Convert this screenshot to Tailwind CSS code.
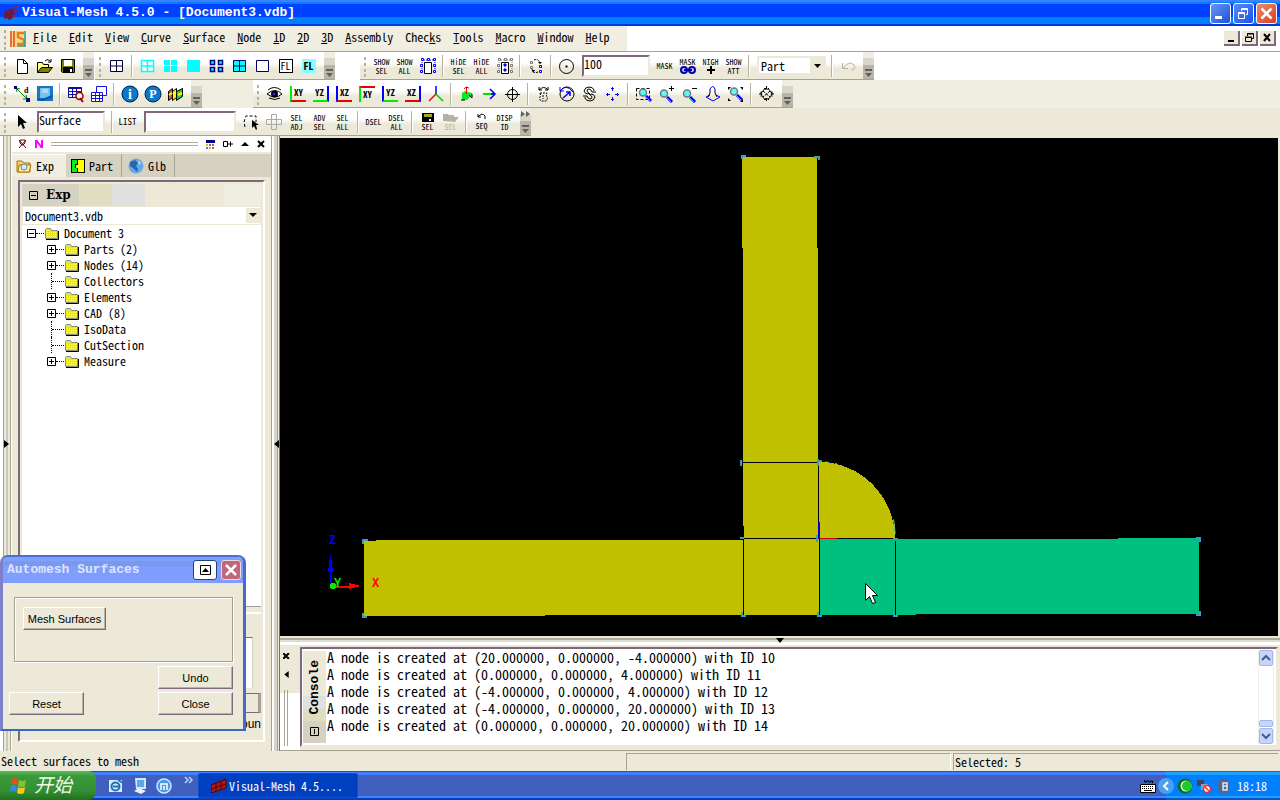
<!DOCTYPE html>
<html lang="en">
<head>
<meta charset="utf-8">
<title>Visual-Mesh 4.5.0 - [Document3.vdb]</title>
<script src="https://cdn.jsdelivr.net/npm/@tailwindcss/browser@4"></script>
</head>
<body class="h-screen overflow-hidden flex flex-col bg-[#ece9d8] text-black text-[12px] leading-4 font-['Noto_Sans_Mono_CJK_SC','Liberation_Mono',monospace]">

<svg width="0" height="0" class="absolute" aria-hidden="true">
  <symbol id="grip" viewBox="0 0 10 24"><path d="M4 3h2v3H4zM4 9h2v3H4zM4 15h2v3H4zM4 20h2v3H4z" fill="#b5b2a3"/></symbol>
  <symbol id="more" viewBox="0 0 11 27"><path d="M0 0h11v6H0z" fill="#f0eee4"/><path d="M0 6h11v7H0z" fill="#d8d5cb"/><path d="M0 13h11v14H0z" fill="#b8b5a6"/><path d="M2 17h7v2H2zM2 21h7l-3.500 4z" fill="#606060"/></symbol>
  <symbol id="folder" viewBox="0 0 16 13"><path d="M1.500 11.500v-9l1-1h4l1 2h6v8z" fill="#e8e820" stroke="#8c8c8c"/><path d="M2 12.500h12.500V4" fill="none" stroke="#000"/><path d="M3 5.500h10M3 7.500h10M3 9.500h10" stroke="#fffba0" stroke-dasharray="1 1"/></symbol>
  <symbol id="plus" viewBox="0 0 9 9"><path d="M.5.5h8v8h-8z" fill="#fff" stroke="#000"/><path d="M2 4.500h5M4.500 2v5" stroke="#000"/></symbol>
  <symbol id="minus" viewBox="0 0 9 9"><path d="M.5.5h8v8h-8z" fill="none" stroke="#000"/><path d="M2 4.500h5" stroke="#000"/></symbol>
  <symbol id="lens" viewBox="0 0 18 18"><circle cx="7" cy="6.500" r="3.500" fill="#5ff" stroke="#777" stroke-width="1.500"/><path d="M10 10l5 5" stroke="#00f" stroke-width="3"/><path d="M9 10l5 5" stroke="#0cf"/></symbol>
</svg>

<!-- Title bar -->
<header class="h-[26px] shrink-0 flex items-center pl-1 pr-[3px] bg-[linear-gradient(#4080ff_0_2px,#0080ff_2px_4px,#0040ff_4px_17px,#0080ff_17px_24px,#0038e8_24px)] text-white">
  <svg class="w-[18px] h-[18px] shrink-0" viewBox="0 0 18 18" aria-hidden="true"><path d="M0 10l2-4 2 1 2-3 2 2 3-3-1 4 1 3-3 1 1 3-4 2-2-2-3 1z" fill="#701838"/><path d="M10 4l3-2M10 8l3-1M9 13l3-2" stroke="#a02030" stroke-width="2"/></svg>
  <h1 class="font-bold text-[13px] font-['Liberation_Mono',monospace] whitespace-pre">Visual-Mesh 4.5.0 - [Document3.vdb]</h1>
  <div class="ml-auto flex gap-[2px] [&_button]:w-[21px] [&_button]:h-[21px] [&_button]:rounded-[3px] [&_button]:border [&_button]:border-white">
    <button aria-label="Minimize" class="bg-linear-to-br from-[#6a94f8] to-[#1c50d8]"><svg viewBox="0 0 19 19"><path d="M4 12h7v3H4z" fill="#fff"/></svg></button>
    <button aria-label="Restore" class="bg-linear-to-br from-[#5a8af8] to-[#1c50e8]"><svg viewBox="0 0 19 19" fill="none" stroke="#fff"><path d="M4.500 8.500h6v6h-6zM4 9.500h7M7.500 7V4.500h6v6H12M7 5.500h7"/></svg></button>
    <button aria-label="Close" class="bg-linear-to-br from-[#f08868] to-[#d83c18]"><svg viewBox="0 0 19 19"><path d="M4.500 4.500l10 10M14.500 4.500l-10 10" stroke="#fff" stroke-width="2.500"/></svg></button>
  </div>
</header>

<!-- Menu bar -->
<nav class="h-[26px] shrink-0 flex items-center bg-white border-b border-[#a5a293] pr-1">
  <div class="h-full w-[627px] flex items-center bg-[#f0eee1]">
    <svg class="w-[10px] h-6 shrink-0"><use href="#grip"/></svg>
    <svg class="w-4 h-4 shrink-0" viewBox="0 0 16 16"><path d="M0 0h16v16H0z" fill="#f8d890"/><path d="M1 0v16M4 0v16" stroke="#e04818" stroke-width="1.500"/><path d="M14 2H8v4l6 3v4H7" fill="none" stroke="#e88010" stroke-width="2.500"/><path d="M15 0v16M7 15h8" stroke="#30a090" stroke-width="1.500"/></svg>
    <div class="flex gap-3 pl-[7px] pb-[3px] [&_button]:whitespace-nowrap">
      <button><u>F</u>ile</button><button><u>E</u>dit</button><button><u>V</u>iew</button><button><u>C</u>urve</button><button><u>S</u>urface</button><button><u>N</u>ode</button><button><u>1</u>D</button><button><u>2</u>D</button><button><u>3</u>D</button><button><u>A</u>ssembly</button><button>Chec<u>k</u>s</button><button><u>T</u>ools</button><button><u>M</u>acro</button><button><u>W</u>indow</button><button><u>H</u>elp</button>
    </div>
  </div>
  <div class="ml-auto flex gap-[2px] [&_button]:w-4 [&_button]:h-[15px] [&_button]:bg-[#ece9d8] [&_button]:border-r-2 [&_button]:border-b-2 [&_button]:border-[#80687c]">
    <button aria-label="Minimize document"><svg viewBox="0 0 14 13"><path d="M4 9h6v2H4z"/></svg></button>
    <button aria-label="Restore document"><svg viewBox="0 0 14 13" fill="none" stroke="#000"><path d="M3.500 6.500h6v4h-6zM3 6h7M5.500 5V2.500h6v5H10M5 3h7"/></svg></button>
    <button aria-label="Close document"><svg viewBox="0 0 14 13"><path d="M4 3l6 7M10 3l-6 7" stroke="#000" stroke-width="2"/></svg></button>
  </div>
</nav>

<!-- Toolbars -->
<div class="shrink-0 [&_button]:w-[23px] [&_button]:h-[27px] [&_button]:shrink-0 [&_button]:flex [&_button]:flex-col [&_button]:items-center [&_button]:justify-center [&_button]:text-[8px] [&_button]:leading-[9px] [&_button]:font-medium [&_button>svg]:w-[18px] [&_button>svg]:h-[18px] [&_i]:w-[2px] [&_i]:h-[22px] [&_i]:mx-[3px] [&_i]:shrink-0 [&_i]:bg-[#b5b2a3] [&_i]:border-r [&_i]:border-white">

  <div class="h-7 flex bg-white">
    <div class="flex items-center h-7 border-b border-[#a5a293] bg-[linear-gradient(#fff_0_10px,#f5f3ea_14px,#ece9d8_16px)]">
      <svg class="w-[10px] h-6"><use href="#grip"/></svg>
      <button aria-label="New"><svg viewBox="0 0 18 18"><path d="M4.500 2.500h6l4 4v10h-10zM10.500 2.500v4h4" fill="#fff" stroke="#000"/></svg></button>
      <button aria-label="Open"><svg viewBox="0 0 18 18"><path d="M1.500 15.500v-10h5l1 2h5v3" fill="#ff8" stroke="#000"/><path d="M1.500 15.500l4-5h11l-4 5z" fill="#808000" stroke="#000"/><path d="M9 4q3-3 6 1M15 2v3h-3" fill="none" stroke="#000"/></svg></button>
      <button aria-label="Save"><svg viewBox="0 0 18 18"><path d="M2.500 2.500h13v13h-12l-1-1z" fill="#808000" stroke="#000"/><path d="M5 3h8v6H5z" fill="#fff"/><path d="M4 10h10v6H4z"/><path d="M11 12h2v3h-2z" fill="#fff"/></svg></button>
      <button aria-label="More file tools" class="w-[11px]! ml-1"><svg class="w-[11px]! h-[27px]!"><use href="#more"/></svg></button>
    </div>
    <div class="ml-px flex items-center h-7 border-b border-[#a5a293] bg-[linear-gradient(#fff_0_10px,#f5f3ea_14px,#ece9d8_16px)]">
      <svg class="w-[10px] h-6"><use href="#grip"/></svg>
      <button aria-label="Grid"><svg viewBox="0 0 18 18"><path d="M2.500 3.500h12v11h-12zM8.500 3v12M2 9h13" fill="#fff" stroke="#000040"/></svg></button><i></i>
      <button aria-label="Wireframe"><svg viewBox="0 0 18 18"><path d="M2.500 3.500h12v11h-12zM8.500 3v12M2 9h13" fill="#fff" stroke="#0ff" stroke-width="1.500"/></svg></button>
      <button aria-label="Flat with edges"><svg viewBox="0 0 18 18"><path d="M2 3h6v5H2zM9 3h6v5H9zM2 9h6v6H2zM9 9h6v6H9z" fill="#0ff"/></svg></button>
      <button aria-label="Flat"><svg viewBox="0 0 18 18"><path d="M2 3h13v12H2z" fill="#0ff"/></svg></button>
      <button aria-label="Shrink"><svg viewBox="0 0 18 18"><path d="M2.500 3.500h4v4h-4zM10.500 3.500h4v4h-4zM2.500 10.500h4v4h-4zM10.500 10.500h4v4h-4z" fill="#0ff" stroke="#000080" stroke-width="1.500"/></svg></button>
      <button aria-label="Shaded grid"><svg viewBox="0 0 18 18"><path d="M2.500 3.500h12v11h-12zM8.500 3v12M2 9h13" fill="#0ff" stroke="#000080"/></svg></button>
      <button aria-label="Outline"><svg viewBox="0 0 18 18"><path d="M2.500 3.500h12v11h-12z" fill="#fff" stroke="#000060"/></svg></button>
      <button aria-label="Feature lines"><span class="border border-black bg-white w-[14px] h-[14px] leading-3 text-[10px]">FL</span></button>
      <button aria-label="Feature lines shaded"><span class="bg-[#8ff] w-[14px] h-[14px] leading-[14px] text-[10px] font-bold">FL</span></button>
      <button aria-label="More display tools" class="w-[11px]! ml-1"><svg class="w-[11px]! h-[27px]!"><use href="#more"/></svg></button>
    </div>
    <div class="ml-[25px] flex items-center h-7 border-b border-[#a5a293] bg-[linear-gradient(#fff_0_10px,#f5f3ea_14px,#ece9d8_16px)]">
      <svg class="w-[10px] h-6"><use href="#grip"/></svg>
      <button><span>SHOW</span><span>SEL</span></button>
      <button><span>SHOW</span><span>ALL</span></button>
      <button aria-label="Show box"><svg viewBox="0 0 18 18" fill="#fff" stroke="#00f"><path d="M5 3h9M3 5v9M16 5v9" stroke-dasharray="1 1"/><path d="M5.500 5.500h7v11h-7z" stroke="#000"/><path d="M2.500 1.500h2v2h-2zM8.500 1.500h2v2h-2zM14.500 1.500h2v2h-2zM1.500 7.500h2v2h-2zM14.500 7.500h2v2h-2zM1.500 13.500h2v2h-2zM14.500 13.500h2v2h-2z"/></svg></button><i></i>
      <button><span>HiDE</span><span>SEL</span></button>
      <button><span>HiDE</span><span>ALL</span></button>
      <button aria-label="Hide box"><svg viewBox="0 0 18 18" fill="#fff" stroke="#777"><path d="M5 3h9M3 5v9M16 5v9" stroke-dasharray="1 1"/><path d="M5.500 5.500h7v11h-7z" stroke="#000"/><path d="M2.500 1.500h2v2h-2zM8.500 1.500h2v2h-2zM14.500 1.500h2v2h-2zM1.500 7.500h2v2h-2zM14.500 7.500h2v2h-2zM1.500 13.500h2v2h-2zM14.500 13.500h2v2h-2z"/><path d="M8 7h2v2H8zM8 12h2v2H8z" fill="#00f" stroke="#00f"/></svg></button><i></i>
      <button aria-label="Swap visible"><svg viewBox="0 0 18 18" fill="none"><path d="M7 3q5-2 6 4M5 12q1 5 6 3" stroke="#000" stroke-dasharray="2 1"/><path d="M3.500 4.500h2v2h-2zM3.500 9.500h2v2h-2z" stroke="#777"/><path d="M12.500 8.500h2v2h-2zM12.500 13.500h2v2h-2z" stroke="#00f"/><path d="M11 5h4l-2 2zM5 13h3l-2 3z" fill="#000"/></svg></button><i></i>
      <button aria-label="Centre"><svg viewBox="0 0 18 18"><circle cx="8.500" cy="9.500" r="7" fill="none" stroke="#000"/><path d="M7.500 8.500h2v2h-2z"/></svg></button>
      <input aria-label="Percentage" value="100" class="ml-1 mr-[3px] w-[68px] h-[22px] shrink-0 bg-white border-2 border-t-[#80687c] border-l-[#80687c] border-r-[#ece9d8] border-b-[#ece9d8] text-[12px] leading-4 pb-1">
      <button><span>MASK</span></button>
      <button aria-label="Mask linked"><span>MASK</span><svg class="h-[9px]!" viewBox="0 0 18 9"><rect x="2" y="1" width="6" height="6" rx="3" fill="#ccf" stroke="#00a" stroke-width="2"/><rect x="10" y="1" width="6" height="6" rx="3" fill="#ccf" stroke="#00a" stroke-width="2"/><path d="M5 4h8" stroke="#00a" stroke-width="2"/></svg></button>
      <button aria-label="Neighbours"><span>NIGH</span><svg class="h-[9px]!" viewBox="0 0 18 9"><path d="M8 0h2v8H8zM5 3h8v2H5z"/></svg></button>
      <button><span>SHOW</span><span>ATT</span></button><i></i>
      <div class="relative ml-1 mr-[2px] w-[69px] h-[19px] shrink-0 border-2 border-[#ece9d8] bg-white">
        <select aria-label="Entity" class="appearance-none w-full h-[15px] leading-[15px] bg-transparent pl-[2px] block"><option>Part</option></select>
        <svg class="absolute right-0 top-0 w-[14px] h-[15px] pointer-events-none bg-[#ece9d8]" viewBox="0 0 14 15"><path d="M4 6h7l-3.500 4z"/></svg>
      </div><i></i>
      <button aria-label="Undo"><svg viewBox="0 0 18 18" fill="none" stroke="#b5b2a3"><path d="M3.500 6v5.500H9M3.500 11.500l4-4q4-3 7 0t0 5h-2"/></svg></button>
      <button aria-label="More selection tools" class="w-[11px]! ml-1"><svg class="w-[11px]! h-[27px]!"><use href="#more"/></svg></button>
    </div>
  </div>

  <div class="h-7 flex bg-[#f0eee1]">
    <div class="flex items-center h-7 border-b border-[#a5a293] bg-[linear-gradient(#fff_0_10px,#f5f3ea_14px,#ece9d8_16px)]">
      <svg class="w-[10px] h-6"><use href="#grip"/></svg>
      <button aria-label="Distance"><svg viewBox="0 0 18 18"><path d="M3 3l11 11M7 4L3 3l1 4M10 14l4 0-1-4" fill="none" stroke="#080"/><path d="M1 1h3v3H1zM13 13h4v4h-4z" fill="#000080"/><text x="11" y="8" font-size="8" font-weight="bold" font-family="Liberation Serif">d</text></svg></button>
      <button aria-label="Snapshot"><svg viewBox="0 0 18 18"><path d="M1 1h16v15H1z" fill="#1878c0"/><path d="M4 3h10v10H4z" fill="#78c0f0"/><path d="M6 4h6v4H6z" fill="#a8dcf8"/><path d="M2 14l5 1 9-4" fill="none" stroke="#0458a8" stroke-width="2"/></svg></button><i></i>
      <button aria-label="Query"><svg viewBox="0 0 18 18" fill="none" stroke="#1010a0"><path d="M1.500 2.500h13v10h-13zM2 3.500h12M2 6.500h12M2 9.500h12M5.500 3v9M9.500 3v9"/><circle cx="12.500" cy="11" r="3.500" fill="#fff" stroke="#900" stroke-width="1.500"/><path d="M13 13l3 4" stroke="#900" stroke-width="2"/></svg></button>
      <button aria-label="Tables"><svg viewBox="0 0 18 18" fill="#fff" stroke="#1010e0"><path d="M6.500 1.500h10v9h-10z"/><path d="M1.500 7.500h11v9h-11zM2 10.500h10M2 13.500h10M5.500 8v8M9.500 8v8"/></svg></button><i></i>
      <button aria-label="Information"><svg viewBox="0 0 18 18"><circle cx="9" cy="9" r="8" fill="#0878d0" stroke="#024"/><text x="9" y="14" text-anchor="middle" fill="#fff" font-size="14" font-weight="bold" font-family="Liberation Serif">i</text></svg></button>
      <button aria-label="Part information"><svg viewBox="0 0 18 18"><circle cx="9" cy="9" r="8" fill="#0878d0" stroke="#024"/><text x="9" y="13" text-anchor="middle" fill="#fff" font-size="12" font-weight="bold" font-family="Liberation Serif">P</text></svg></button>
      <button aria-label="Contour"><svg viewBox="0 0 18 18" stroke="#000"><path d="M1.500 6.500l4-3v9l-4 3z" fill="#f44"/><path d="M5.500 6.500l4-3v9l-4 3z" fill="#fe2"/><path d="M9.500 6.500l6-3v8l-6 4z" fill="#1c4"/><path d="M2 10l3-2M6 9l3-2M11 10l4-2" stroke="#ff0" stroke-width="2"/></svg></button>
      <button aria-label="More tools" class="w-[11px]! ml-1"><svg class="w-[11px]! h-[27px]!"><use href="#more"/></svg></button>
    </div>
    <div class="ml-[51px] flex items-center h-7 border-b border-[#a5a293] bg-[linear-gradient(#fff_0_10px,#f5f3ea_14px,#ece9d8_16px)]">
      <svg class="w-[10px] h-6"><use href="#grip"/></svg>
      <button aria-label="View"><svg viewBox="0 0 18 18"><path d="M1 9q8-7 15 0-7 6-15 0z" fill="#fff" stroke="#000"/><circle cx="8.500" cy="9" r="3.500"/><circle cx="8" cy="9" r="1.500" fill="#22f"/><path d="M2 5q6-5 13 0M3 13q6 3 11 0" fill="none" stroke="#000"/></svg></button>
      <button aria-label="XY view" class="text-[9px]! font-bold!"><span class="w-4 h-4 leading-[14px] border-l-2 border-l-[#0e0] border-b-2 border-b-[#e00]">XY</span></button>
      <button aria-label="YZ view" class="text-[9px]! font-bold!"><span class="w-4 h-4 leading-[14px] border-r-2 border-r-[#00f] border-b-2 border-b-[#0e0]">YZ</span></button>
      <button aria-label="XZ view" class="text-[9px]! font-bold!"><span class="w-4 h-4 leading-[14px] border-l-2 border-l-[#00f] border-b-2 border-b-[#e00]">XZ</span></button>
      <button aria-label="Reverse XY view" class="text-[9px]! font-bold!"><span class="w-4 h-4 leading-[14px] border-l-2 border-l-[#0e0] border-t-2 border-t-[#e00]">XY</span></button>
      <button aria-label="Reverse YZ view" class="text-[9px]! font-bold!"><span class="w-4 h-4 leading-[14px] border-l-2 border-l-[#00f] border-b-2 border-b-[#0e0]">YZ</span></button>
      <button aria-label="Reverse XZ view" class="text-[9px]! font-bold!"><span class="w-4 h-4 leading-[14px] border-r-2 border-r-[#00f] border-b-2 border-b-[#e00]">XZ</span></button>
      <button aria-label="Isometric"><svg viewBox="0 0 18 18" stroke-width="1.500"><path d="M9 1v9" stroke="#00f"/><path d="M9 9l-7 7" stroke="#e00"/><path d="M9 9l7 7" stroke="#0c0"/></svg></button><i></i>
      <button aria-label="Pick rotation"><svg viewBox="0 0 18 18"><path d="M4 8l3-2 3 1 4 1v3l-3 2-2 2H4z" fill="#0e2"/><path d="M8.500 2v7M6 4l2-2 3 1" fill="none" stroke="#e00"/><path d="M3 15h4M11 10l3 3M14 9v4" stroke="#000"/></svg></button>
      <button aria-label="Direction"><svg viewBox="0 0 18 18" fill="none" stroke-width="1.500"><path d="M2 9h10" stroke="#0d0" stroke-width="2"/><path d="M9 4l5 5-5 5M10 9h4" stroke="#00f"/></svg></button>
      <button aria-label="Set centre"><svg viewBox="0 0 18 18" fill="none" stroke="#000"><circle cx="8.500" cy="9.500" r="5"/><path d="M8.500 2v15M1 9.500h15"/></svg></button><i></i>
      <button aria-label="Rotate"><svg viewBox="0 0 18 18" fill="none" stroke="#000"><path d="M4 5q5-5 9 0M4 2v3h3M13 2v3h-3"/><path d="M5 8l7 0M5 8q1 2 0 4t1 4h5q2-2 1-4t0-4M8 10v4" stroke-dasharray="2 1"/></svg></button>
      <button aria-label="Free rotate"><svg viewBox="0 0 18 18" fill="none"><circle cx="9" cy="9" r="7" stroke="#000"/><path d="M2 6q6-8 13 1M2 2v4h4" stroke="#00c"/><path d="M5 13l7-6M8 7h4v4" stroke="#00f" stroke-width="1.500"/></svg></button>
      <button aria-label="Spin"><svg viewBox="0 0 18 18" fill="none" stroke="#000"><path d="M13 6V5q-1-3-5-3T3 6q1 3 4 3M4 12v1q1 3 5 3t5-4q-1-3-4-3"/><path d="M11 7q-1-3-3-3T6 6q0 1 4 4M6 11q1 3 3 3t2-2q0-1-4-4M11 7h4M2 11h4"/></svg></button>
      <button aria-label="Pan"><svg viewBox="0 0 18 18" fill="none" stroke="#00f"><path d="M8.500 2v4M8.500 12v4M2 9.500h4M11 9.500h4M7 3.500h3M7 14.500h3M3.500 8v3M13.500 8v3"/></svg></button><i></i>
      <button aria-label="Zoom window"><svg viewBox="0 0 18 18"><path d="M1.500 3.500h13v11h-13z" fill="none" stroke="#000" stroke-dasharray="3 2"/><use href="#lens" x="1" y="1" width="18" height="18"/></svg></button>
      <button aria-label="Zoom in"><svg viewBox="0 0 18 18"><use href="#lens" x="-1" y="2" width="18" height="18"/><path d="M11 3.500h5M13.500 1v5" stroke="#000"/></svg></button>
      <button aria-label="Zoom out"><svg viewBox="0 0 18 18"><use href="#lens" x="-1" y="2" width="18" height="18"/><path d="M11 3.500h5" stroke="#000"/></svg></button>
      <button aria-label="Perspective"><svg viewBox="0 0 18 18" fill="none"><path d="M6 4q3-5 5 0M9 16l-7-4 4-2M9 16l7-4-4-2" stroke="#00f"/><path d="M6 4v4l-2 4M11 4v4l2 4" stroke="#000"/></svg></button>
      <button aria-label="Zoom fit"><svg viewBox="0 0 18 18"><use href="#lens" width="18" height="18"/><path d="M1 5V2h3zM13 2h3v3zM1 13v3h3zM16 14v3h-3z"/></svg></button><i></i>
      <button aria-label="Target"><svg viewBox="0 0 18 18" fill="none" stroke="#000"><circle cx="8.500" cy="9" r="5"/><path d="M5 6l7 6M12 6l-7 6M6 3.500h5M8.500 1v4M6 14.500h5M8.500 13v4M3 6.500v5M1 9h3M14 6.500v5M13 9h3" stroke-dasharray="3 1"/></svg></button>
      <button aria-label="More view tools" class="w-[11px]! ml-1"><svg class="w-[11px]! h-[27px]!"><use href="#more"/></svg></button>
    </div>
  </div>

  <div class="h-7 flex bg-[#ece9d8]">
    <div class="flex items-center h-7 border-b border-[#a5a293] bg-[linear-gradient(#fff_0_10px,#f5f3ea_14px,#ece9d8_16px)]">
      <svg class="w-[10px] h-6"><use href="#grip"/></svg>
      <button aria-label="Select"><svg viewBox="0 0 18 18"><path d="M5 2v12l3-3 2 5 2-1-2-5h4z"/></svg></button>
      <input aria-label="Entity type" value="Surface" class="ml-1 mr-[3px] w-[68px] h-[22px] shrink-0 bg-white border-2 border-t-[#80687c] border-l-[#80687c] border-r-[#ece9d8] border-b-[#ece9d8] text-[12px] leading-4 pb-1"><i></i>
      <button class="text-[9px]!"><span>LIST</span></button>
      <input aria-label="List" class="ml-[5px] mr-[3px] w-[92px] h-[22px] shrink-0 bg-white border-2 border-t-[#80687c] border-l-[#80687c] border-r-[#ece9d8] border-b-[#ece9d8] text-[12px]">
      <button aria-label="Box select"><svg viewBox="0 0 18 18"><path d="M3 14l-1-5 2-6h10v6" fill="none" stroke="#000" stroke-dasharray="3 2"/><path d="M10 7v8l2-2 2 4 1-1-1-4h3z"/></svg></button>
      <button aria-label="Add adjacent"><svg viewBox="0 0 18 18" fill="none" stroke="#aaa"><path d="M6.500 1.500h5v15h-5zM1.500 6.500h15v5h-15z"/></svg></button>
      <button><span>SEL</span><span>ADJ</span></button>
      <button><span>ADV</span><span>SEL</span></button>
      <button><span>SEL</span><span>ALL</span></button><i></i>
      <button><span>DSEL</span></button>
      <button><span>DSEL</span><span>ALL</span></button><i></i>
      <button><svg class="w-3! h-[9px]!" viewBox="0 0 12 9"><path d="M0 0h12v9H0z"/><path d="M2 1h8v3H2z" fill="#a8a820"/><path d="M7 6h2v2H7z" fill="#fff"/></svg><span>SEL</span></button>
      <button class="text-[#b5b2a3]"><svg class="w-4! h-[9px]!" viewBox="0 0 16 9"><path d="M0 8V1h5l1 1h5v2h5l-4 5z" fill="#b5b2a3"/></svg><span>SEL</span></button><i></i>
      <button><svg class="w-3! h-2!" viewBox="0 0 12 8" fill="none" stroke="#000"><path d="M2 1v3h3M2 4q4-5 7-1v3"/></svg><span>SEQ</span></button>
      <button><span>DISP</span><span>ID</span></button>
      <button aria-label="More select tools" class="w-[11px]! ml-1"><svg class="w-[11px]! h-[27px]!" viewBox="0 0 11 27"><use href="#more" width="11" height="27"/><path d="M1 3l4 3-4 3zM6 3l4 3-4 3z" fill="#606060"/></svg></button>
    </div>
  </div>
</div>

<!-- Workspace -->
<main class="flex-1 min-h-0 flex">
  <div class="w-3 shrink-0 flex items-center justify-center bg-[linear-gradient(90deg,#fff_0_3px,#a5a293_3px_4px,#ece9d8_4px_6px,#cac7b8_6px_8px,#ece9d8_8px_10px,#a5a293_10px_11px,#fff_11px)]"><svg class="w-[5px] h-[8px]" viewBox="0 0 5 8"><path d="M0 0l5 4-5 4z"/></svg></div>

  <aside class="w-[260px] shrink-0 flex flex-col bg-[#ece9d8] border-r border-[#a5a293]">
    <div class="h-4 shrink-0 flex items-center gap-2 px-[6px] bg-white">
      <svg class="w-[9px] h-[10px]" viewBox="0 0 9 10" fill="none" stroke="#700"><path d="M1 1l7 8M8 1L1 9M2 1h5v3L5 6H4L2 4z"/></svg>
      <svg class="w-2 h-2" viewBox="0 0 8 8"><path d="M1 8V0l6 8V0" fill="none" stroke="#f0f" stroke-width="2"/></svg>
      <div class="flex-1 h-1 border-y border-[#b0ad9e]"></div>
      <svg class="w-[9px] h-[9px]" viewBox="0 0 9 9"><path d="M0 0h9v3H0z" fill="#008"/><path d="M0 4h2v2H0zM3 7h2v2H3z" fill="#cc0"/><path d="M3 4h2v2H3zM6 7h2v2H6z" fill="#e44"/><path d="M6 4h2v2H6zM0 7h2v2H0z" fill="#48c"/></svg>
      <svg class="w-[10px] h-2" viewBox="0 0 10 8"><path d="M.5 1.500h4v5h-4zM5 4h5M7.500 1.500v5" fill="none" stroke="#000"/></svg>
      <svg class="w-2 h-2" viewBox="0 0 8 8"><path d="M0 6h8L4 2z"/></svg>
      <svg class="w-2 h-2" viewBox="0 0 8 8"><path d="M1 1l6 6M7 1L1 7" stroke="#000" stroke-width="2"/></svg>
    </div>
    <div role="tablist" class="h-[23px] mt-[2px] shrink-0 flex items-end bg-[#d6d2c2] [&_button]:flex [&_button]:items-center [&_button]:h-[23px] [&_button]:gap-1">
      <button role="tab" aria-selected="true" class="w-[54px] pl-1 bg-[#f0eee1] border-t border-white"><svg class="w-4 h-4 shrink-0" viewBox="0 0 16 16"><path d="M1 3h5l2 2h6v9H1z" fill="#fc6" stroke="#a70"/><path d="M3 7h12l-2 7H2z" fill="#ffe9a0" stroke="#a70"/><circle cx="8" cy="9" r="3" fill="#cef" stroke="#68a"/></svg>Exp</button>
      <button role="tab" class="w-14 pl-[5px] border-r border-[#a5a293]"><svg class="w-[14px] h-[14px] shrink-0" viewBox="0 0 14 14"><path d="M0 0h14v14H0z"/><path d="M1 1h5v4H4v4h2v4H1z" fill="#0e2"/><path d="M7 1h6v12H7V9H5V6h2z" fill="#ff0"/></svg>Part</button>
      <button role="tab" class="w-[53px] pl-[6px] border-r border-[#a5a293]"><svg class="w-4 h-4 shrink-0" viewBox="0 0 16 16"><circle cx="8" cy="8" r="7.500" fill="#68a8e8"/><path d="M2 4l5-2 3 3-2 3 2 3-1 3-4-4-3-2z" fill="#2868a8"/><path d="M10 2l3 3-2 2zM4 2l3-1" fill="#c8e0f0"/></svg>Glb</button>
    </div>
    <div class="flex-1 min-h-0 mt-[3px] mb-[9px] ml-[6px] mr-[6px] flex flex-col border-2 border-t-[#80687c] border-l-[#80687c] border-r-white border-b-white">
      <div class="h-[25px] shrink-0 p-[2px]"><div class="h-[22px] flex items-center gap-2 pl-[7px] bg-[linear-gradient(90deg,#d6d2c2_0_57px,#e0dec0_57px_90px,#e0e0e0_90px_123px,#ece9d8_123px_202px,#f0eee1_202px)]"><svg class="w-[9px] h-[9px]"><use href="#minus"/></svg><h2 class="font-bold text-[12px] font-['DejaVu_Serif','Liberation_Serif',serif]">Exp</h2></div></div>
      <div class="relative h-[17px] shrink-0 mx-[3px] bg-white">
        <select aria-label="Document" class="appearance-none block w-full h-[17px] leading-4 bg-white pl-[2px] text-[12px]"><option>Document3.vdb</option></select>
        <svg class="absolute right-0 top-px w-[14px] h-[15px] bg-[#ece9d8] pointer-events-none" viewBox="0 0 14 15"><path d="M3 5h8l-4 4z"/></svg>
      </div>
      <ul class="h-[382px] shrink-0 mt-px ml-[2px] mr-[2px] pl-[5px] bg-white border-b border-[#a5a293] [&_li]:h-4 [&_li]:flex [&_li]:items-center [&_li]:whitespace-pre">
        <li><svg class="w-[9px] h-[9px]"><use href="#minus"/></svg><span class="w-2 border-t border-dotted border-black"></span><svg class="w-4 h-[13px] mr-1"><use href="#folder"/></svg>Document 3</li>
        <li class="pl-5"><svg class="w-[9px] h-[9px]"><use href="#plus"/></svg><span class="w-2 border-t border-dotted border-black"></span><svg class="w-4 h-[13px] mr-1"><use href="#folder"/></svg>Parts (2)</li>
        <li class="pl-5"><svg class="w-[9px] h-[9px]"><use href="#plus"/></svg><span class="w-2 border-t border-dotted border-black"></span><svg class="w-4 h-[13px] mr-1"><use href="#folder"/></svg>Nodes (14)</li>
        <li class="pl-6"><span class="h-4 border-l border-dotted border-black"></span><span class="w-3 border-t border-dotted border-black"></span><svg class="w-4 h-[13px] mr-1"><use href="#folder"/></svg>Collectors</li>
        <li class="pl-5"><svg class="w-[9px] h-[9px]"><use href="#plus"/></svg><span class="w-2 border-t border-dotted border-black"></span><svg class="w-4 h-[13px] mr-1"><use href="#folder"/></svg>Elements</li>
        <li class="pl-5"><svg class="w-[9px] h-[9px]"><use href="#plus"/></svg><span class="w-2 border-t border-dotted border-black"></span><svg class="w-4 h-[13px] mr-1"><use href="#folder"/></svg>CAD (8)</li>
        <li class="pl-6"><span class="h-4 border-l border-dotted border-black"></span><span class="w-3 border-t border-dotted border-black"></span><svg class="w-4 h-[13px] mr-1"><use href="#folder"/></svg>IsoData</li>
        <li class="pl-6"><span class="h-4 border-l border-dotted border-black"></span><span class="w-3 border-t border-dotted border-black"></span><svg class="w-4 h-[13px] mr-1"><use href="#folder"/></svg>CutSection</li>
        <li class="pl-5"><svg class="w-[9px] h-[9px]"><use href="#plus"/></svg><span class="w-2 border-t border-dotted border-black"></span><svg class="w-4 h-[13px] mr-1"><use href="#folder"/></svg>Measure</li>
      </ul>
      <div class="mt-[5px] mr-[2px] h-[25px] shrink-0 border-t-2 border-white"></div>
      <div class="h-[51px] mr-[10px] shrink-0 bg-white border-t border-t-[#80687c] border-r border-r-[#d6d2c2]"></div>
      <div class="mt-[5px] mr-[2px] h-5 shrink-0 border-t border-b border-[#80687c] border-r-[3px] border-r-[#a5a293]"></div>
      <p class="mr-[2px] text-right font-['Liberation_Sans',sans-serif] leading-[22px]">oun</p>
    </div>
  </aside>
  <div class="w-2 shrink-0 flex items-center justify-center bg-[linear-gradient(90deg,#fff_0_2px,#d8d5c8_2px_5px,#a5a293_5px_6px,#ece9d8_6px_7px,#80687c_7px)]"><svg class="w-[5px] h-2" viewBox="0 0 5 8"><path d="M5 0L0 4l5 4z"/></svg></div>

  <section class="flex-1 min-w-0 flex flex-col">
    <div class="flex-1 min-h-0 mt-[2px] mr-[2px] bg-black">
      <svg class="w-full h-full block" viewBox="280 138 998 498" preserveAspectRatio="xMinYMin meet" role="img" aria-label="Model view">
        <g shape-rendering="crispEdges">
          <path d="M742 157h75v91h1v291H743V248h-1z" fill="#c0c000"/>
          <path d="M364 541h12v-1h367v-2h76v77H545v1H364z" fill="#c0c000"/>
          <path d="M819 462a76 77 0 0 1 76 77h-76z" fill="#c0c000"/>
          <path d="M819 539h299v-1h81v76H916v1h-97z" fill="#00c080"/>
          <path d="M743 462.500h76M743 538.500h153M743.500 526v89M818.500 462v77M819.500 539v76M895.500 541v74" stroke="#000" fill="none"/>
          <path d="M818.500 538v-16" stroke="#00c" stroke-width="2"/><path d="M820 538.500h17" stroke="#c00"/>
          <path d="M741.500 159v-3h4M814 156.500h5v3M741 460v6M817.500 459v7M819 460.500h3M740 538h4M817 535v7M893 539h5M362.500 544v-4h5M362.500 613v4h4M741.500 612v4h4M817.500 612v4h4M893.500 612v4h4M1200 542v-4h-4M1200 611v4h-4" fill="none" stroke="#3c9cc8" stroke-width="2"/>
          <path d="M330.500 587v-22" stroke="#00f" stroke-width="2"/><path d="M328 572l2-16h1l2 16z" fill="#00f"/>
          <path d="M333 586.500h20" stroke="#f00" stroke-width="2"/><path d="M349 583l12 3-12 3z" fill="#f00"/>
          <circle cx="333" cy="586" r="3" fill="#0e0"/>
        </g>
        <path d="M825 462q68 8 70 72" fill="none" stroke="#90e080" stroke-dasharray="4 6 2 85 30 0"/>
        <g font-family="Liberation Mono" font-size="12" font-weight="bold"><text x="329" y="544" fill="#00f">Z</text><text x="334" y="587" fill="#0e0">Y</text><text x="372" y="587" fill="#f00">X</text></g>
        <path d="M865.500 583.500v17l4-4 3 7 3-1-3-7h5z" fill="#fff" stroke="#000"/>
      </svg>
    </div>
    <div class="h-[9px] shrink-0 flex justify-center items-center bg-[linear-gradient(#ece9d8_0_2px,#b0ad9e_2px_4px,#e0ded0_4px_6px,#fff_6px)]"><svg class="w-2 h-[5px]" viewBox="0 0 8 5"><path d="M0 0h8L4 5z"/></svg></div>
    <div class="h-[106px] shrink-0 flex pr-[2px] border-b border-[#a5a293]">
      <div class="w-5 shrink-0 flex flex-col items-center gap-3 pt-2 bg-[linear-gradient(#ece9d8_0_48px,#fff_48px)]">
        <svg class="w-[7px] h-[6px] shrink-0 mr-2" viewBox="0 0 7 6"><path d="M0 0l6 6M6 0L0 6" stroke="#000" stroke-width="2"/></svg>
        <svg class="w-[5px] h-[7px] shrink-0 mr-2" viewBox="0 0 5 8"><path d="M5 0L0 4l5 4z"/></svg>
        <div class="w-1 mr-2 flex-1 border-x border-[#a5a293] mb-1"></div>
      </div>
      <div class="flex-1 min-w-0 flex mt-[2px] mb-[3px] bg-white border-2 border-t-[#80687c] border-l-[#80687c] border-r-[#ece9d8] border-b-[#ece9d8]">
        <div class="w-[23px] my-[2px] ml-px flex flex-col items-center justify-end gap-3 pb-[7px] bg-[linear-gradient(#ece9d8_0_45px,#e0e0e0_45px_58px,#e0dec0_58px_70px,#d6d2c2_70px)]">
          <span class="[writing-mode:vertical-rl] rotate-180 font-bold text-[13px] font-['Liberation_Mono',monospace]">Console</span>
          <svg class="w-[9px] h-[9px] shrink-0 rotate-90"><use href="#minus"/></svg>
        </div>
        <pre class="flex-1 pl-px text-[14px] leading-[17px] font-['Noto_Sans_Mono_CJK_SC','Liberation_Mono',monospace]">A node is created at (20.000000, 0.000000, -4.000000) with ID 10
A node is created at (0.000000, 0.000000, 4.000000) with ID 11
A node is created at (-4.000000, 0.000000, 4.000000) with ID 12
A node is created at (-4.000000, 0.000000, 20.000000) with ID 13
A node is created at (0.000000, 0.000000, 20.000000) with ID 14</pre>
        <div class="w-4 mr-[2px] my-px flex flex-col items-center border-x border-[#f0eee4] [&_button]:w-[14px] [&_button]:shrink-0 [&_button]:rounded-[2px] [&_button]:bg-[#c8d4fc] [&_button]:border [&_button]:border-[#a0b8e8]">
          <button aria-label="Scroll up" class="h-4"><svg viewBox="0 0 12 14"><path d="M2 9l4-4 4 4" fill="none" stroke="#40608c" stroke-width="2"/></svg></button>
          <button aria-label="Scroll position" class="h-[7px] mt-auto mb-px"></button>
          <button aria-label="Scroll down" class="h-4"><svg viewBox="0 0 12 14"><path d="M2 5l4 4 4-4" fill="none" stroke="#40608c" stroke-width="2"/></svg></button>
        </div>
      </div>
    </div>
  </section>
</main>

<!-- Status bar -->
<div class="h-5 shrink-0 flex items-center pl-px pr-[2px]">
  <p class="flex-1">Select surfaces to mesh</p>
  <div class="w-[325px] h-[17px] border-t border-l border-[#a5a293] border-r border-r-white"></div>
  <div class="ml-[2px] w-[325px] h-[17px] border-t border-l border-[#a5a293] pl-px">Selected: 5</div>
</div>

<!-- Taskbar -->
<footer class="h-[29px] shrink-0 flex items-stretch text-white bg-[linear-gradient(#2050d0_0_1px,#4080ff_1px_4px,#4060c0_4px_25px,#4080ff_25px_27px,#0040c0_27px)]">
  <button class="w-24 rounded-r-lg flex items-center gap-1 pl-2 bg-[linear-gradient(#5cb85c_0,#3a9a3a_5px,#348f34_20px,#1e701e)]">
    <svg class="w-[22px] h-[20px]" viewBox="0 0 22 20"><path d="M4 3q3-2 6 0l-1 6q-3-2-6 0z" fill="#e85020"/><path d="M11 4q4 2 7 0l-1 6q-4 2-7 0z" fill="#80c828"/><path d="M3 10q3-2 6 0l-1 6q-3-2-6 0z" fill="#3088e8"/><path d="M10 11q3 2 7 0l-1 6q-4 2-7 0z" fill="#f8c820"/></svg>
    <span lang="zh-CN" class="italic text-[19px] leading-6 pb-[3px] font-['Noto_Sans_CJK_SC',sans-serif] text-[#f0f8e8]">开始</span>
  </button>
  <div class="w-[102px] flex items-center pl-[12px] gap-2 [&_svg]:w-4 [&_svg]:h-4">
    <button aria-label="Internet Explorer"><svg viewBox="0 0 16 16"><path d="M1 2h13v12H1z" fill="#d8ecfc"/><circle cx="7.500" cy="8.500" r="4" fill="none" stroke="#2070b8" stroke-width="2"/><path d="M5 8.500h6M10 2l5 3" stroke="#2070b8" stroke-width="2"/></svg></button>
    <button aria-label="Show desktop"><svg viewBox="0 0 16 16"><path d="M3 0h11v11H4z" fill="#d0e8ff"/><path d="M5 2h7v7H5z" fill="#60a8e8"/><path d="M2 13l5-3 7 3-5 3z" fill="#e8f0f8"/></svg></button>
    <button aria-label="Maxthon"><svg viewBox="0 0 16 16"><circle cx="8" cy="8" r="7" fill="#4898e8" stroke="#d0e8ff" stroke-width="1.500"/><path d="M5 12V6h6v6M8 8v4" fill="none" stroke="#fff" stroke-width="1.500"/></svg></button>
    <button aria-label="More shortcuts" class="self-start"><svg viewBox="0 0 16 16" fill="none" stroke="#b0d0ff" stroke-width="1.500"><path d="M5 6l3 3-3 3M9 6l3 3-3 3"/></svg></button>
  </div>
  <button class="w-40 my-[2px] pl-3 rounded-[2px] flex items-center gap-[2px] bg-[#0040c0] border border-[#0850c8] whitespace-nowrap"><svg class="w-4 h-4" viewBox="0 0 16 16"><path d="M0 7l15-6v9L0 15zM0 11l15-5M5 5v8M10 3v9" fill="#b01818" stroke="#500"/></svg>Visual-Mesh 4.5....</button>
  <div class="ml-auto flex items-center">
    <svg class="w-4 h-[14px] mr-[10px]" viewBox="0 0 16 14"><path d="M4.500 1v2h2v-1h2v1h2v-1h2v2" stroke="#000" fill="none"/><path d="M.5 5.500h15v8H.5z" fill="#fff" stroke="#000"/><path d="M2 7.500h12M2 9.500h12" stroke="#000" stroke-dasharray="1 1"/><path d="M4 11.500h8" stroke="#000"/></svg>
    <div class="h-full flex items-center gap-[3px] pr-[13px] bg-[linear-gradient(#1068e0_0_1px,#20a0ff_1px_4px,#0080ff_4px_25px,#20a0ff_25px_27px,#0058d0_27px)]">
      <button aria-label="Show hidden icons"><svg class="w-4 h-4 -ml-2" viewBox="0 0 16 16"><circle cx="8" cy="8" r="8" fill="#48a0f0"/><path d="M10 4L6 8l4 4" fill="none" stroke="#fff" stroke-width="2"/></svg></button>
      <svg class="w-4 h-4" viewBox="0 0 16 16"><circle cx="8" cy="8" r="7.500" fill="#087018"/><circle cx="9" cy="8" r="5.500" fill="#e0ffe0"/><circle cx="10" cy="8" r="5" fill="#20c830"/></svg>
      <svg class="w-4 h-4" viewBox="0 0 16 16"><path d="M1 2h7v6H1z" fill="#445"/><path d="M5 6h7v6H5z" fill="#99a"/><circle cx="11" cy="11" r="3.500" fill="#fff" stroke="#d83030" stroke-width="1.500"/><path d="M9 9l4 4" stroke="#d83030" stroke-width="1.500"/></svg>
      <svg class="w-4 h-4 mr-[3px]" viewBox="0 0 16 16"><path d="M2 5q3-6 8-4l4 2v11q-6 4-10 0z" fill="#506890"/><path d="M8 5h4v7H8zM8 8h4" fill="none" stroke="#dde8f8" stroke-width="1.500"/></svg>
      <time>18:18</time>
    </div>
  </div>
</footer>

<!-- Floating dialog -->
<div role="dialog" aria-labelledby="dlg" class="absolute left-0 top-[555px] w-[246px] h-[176px] flex flex-col rounded-t-[8px] bg-[#ece9d8] border-x-[3px] border-b-2 border-t-2 border-l-[#7f80cc] border-r-[#4a68c4] border-b-[#3866c4] border-t-[#4a70d8] font-['Liberation_Sans',sans-serif]">
  <div class="h-[26px] shrink-0 flex items-center pl-1 pr-[2px] rounded-t-[5px] bg-[linear-gradient(#80a0ff_0_4px,#7c98e8_4px_9px,#7f9cff_9px)]">
    <h2 id="dlg" class="font-bold text-[13px] whitespace-pre text-[#dce4fc] font-['Liberation_Mono',monospace]">Automesh Surfaces</h2>
    <button aria-label="Roll up" class="ml-auto w-6 h-5 rounded-[3px] bg-white border border-[#1c4878] flex items-center justify-center"><svg class="w-[11px] h-[10px]" viewBox="0 0 11 10"><path d="M.5.5h10v9H.5z" fill="#fff" stroke="#000"/><path d="M2 7h7L5.500 3z"/></svg></button>
    <button aria-label="Close dialog" class="ml-1 w-5 h-5 rounded-[3px] bg-[#c06878] border border-[#f0d8e0]"><svg viewBox="0 0 18 18"><path d="M4 4l10 10M14 4L4 14" stroke="#fff" stroke-width="2.500"/></svg></button>
  </div>
  <div class="flex-1 flex flex-col pt-[14px] pl-[6px] pr-[10px] text-[11px] [&_button]:h-[23px] [&_button]:border [&_button]:border-t-white [&_button]:border-l-white [&_button]:border-r-[#80687c] [&_button]:border-b-[#80687c] [&_button]:shadow-[inset_-1px_-1px_0_#b8b4a4]">
    <div class="ml-[5px] h-[65px] shrink-0 border border-[#a5a293] p-2 pt-[9px] shadow-[inset_1px_1px_0_#fff,1px_1px_0_#fff]"><button class="w-[83px] whitespace-nowrap">Mesh Surfaces</button></div>
    <div class="mt-1 flex justify-end"><button class="w-[75px]">Undo</button></div>
    <div class="mt-[3px] flex justify-between"><button class="w-[75px]">Reset</button><button class="w-[75px]">Close</button></div>
  </div>
</div>
</body>
</html>
